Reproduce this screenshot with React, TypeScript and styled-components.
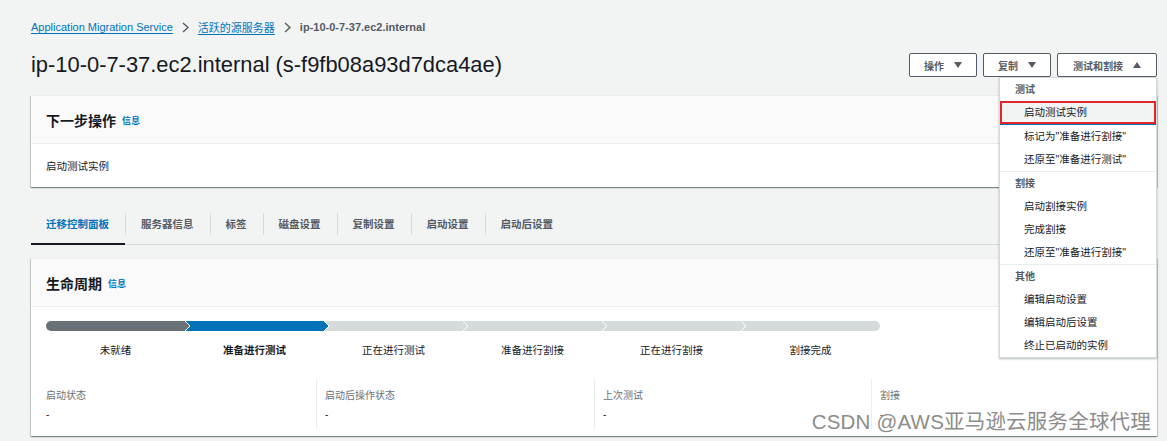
import * as React from 'react';
import styled, { createGlobalStyle } from 'styled-components';

const GlobalStyle = createGlobalStyle`
  body {
    margin: 0;
    background: #f2f3f3;
    font-family: "Liberation Sans", "Noto Sans CJK SC", sans-serif;
    color: #16191f;
  }
`;

const Page = styled.div`
  position: relative;
  width: 1167px;
  height: 441px;
  overflow: hidden;
  background: #f2f3f3;
`;

const Main = styled.div`
  padding: 19px 10px 0 31px;
`;

const Breadcrumbs = styled.nav`
  display: flex;
  align-items: center;
  height: 16px;
  font-size: 11px;
`;

const Crumb = styled.a`
  color: #0073bb;
  text-decoration: underline;
  text-underline-offset: 2px;
`;

const CurrentCrumb = styled.span`
  color: #545b64;
  font-weight: bold;
`;

const Chevron = styled.svg`
  margin: 0 9px;
`;

const HeaderRow = styled.div`
  display: flex;
  align-items: center;
  justify-content: space-between;
  height: 24px;
  margin-top: 18px;
`;

const Title = styled.h1`
  margin: 0;
  font-size: 21.9px;
  font-weight: normal;
  line-height: 24px;
  color: #16191f;
`;

const Actions = styled.div`
  position: relative;
  display: flex;
  gap: 6px;
`;

const Button = styled.button<{ $w: number }>`
  display: flex;
  align-items: center;
  justify-content: center;
  gap: 10px;
  width: ${p => p.$w}px;
  height: 24px;
  padding: 0;
  border: 1px solid #545b64;
  border-radius: 2px;
  background: #fff;
  color: #545b64;
  font-family: inherit;
  font-size: 10px;
  font-weight: bold;
`;

const Caret = styled.span<{ $up?: boolean }>`
  width: 0;
  height: 0;
  border-left: 4px solid transparent;
  border-right: 4px solid transparent;
  ${p => (p.$up ? 'border-bottom: 6px solid #545b64;' : 'border-top: 6px solid #545b64;')}
`;

const Menu = styled.div`
  position: absolute;
  top: 24px;
  right: 0;
  width: 156px;
  background: #fff;
  border: 1px solid #d5dbdb;
  box-shadow: 0 1px 2px rgba(0, 28, 36, 0.3);
  z-index: 10;
`;

const MenuGroup = styled.div`
  & + & {
    border-top: 1px solid #eaeded;
  }
`;

const MenuHeader = styled.div`
  height: 23px;
  line-height: 23px;
  padding-left: 15px;
  font-size: 10px;
  font-weight: bold;
  color: #545b64;
`;

const MenuItem = styled.div<{ $focused?: boolean }>`
  height: 23px;
  line-height: 23px;
  padding-left: 24px;
  font-size: 10.5px;
  color: #16191f;
  ${p =>
    p.$focused &&
    `
    background: #f2f3f3;
    box-shadow: inset 0 0 0 2px #e3262b;
    border-bottom: 1px solid #0073bb;
    line-height: 22px;
  `}
`;

const Card = styled.section<{ $top: number }>`
  margin-top: ${p => p.$top}px;
  background: #fff;
  border-top: 1px solid #eaeded;
  box-shadow: 0 1px 1px 0 rgba(0, 28, 36, 0.3), 1px 1px 1px 0 rgba(0, 28, 36, 0.15),
    -1px 1px 1px 0 rgba(0, 28, 36, 0.15);
`;

const CardHeader = styled.div`
  display: flex;
  align-items: center;
  gap: 6px;
  height: 47px;
  padding: 0 15px;
  background: #fafafa;
  border-bottom: 1px solid #eaeded;
`;

const CardTitle = styled.h2`
  margin: 0;
  font-size: 14px;
  font-weight: bold;
  color: #16191f;
`;

const InfoLink = styled.a`
  font-size: 9px;
  font-weight: bold;
  color: #0073bb;
  margin-top: 1px;
`;

const NextStep = styled.div`
  display: flex;
  align-items: center;
  height: 43px;
  padding: 0 15px;
  font-size: 10.5px;
  color: #16191f;
`;

const TabList = styled.div`
  display: flex;
  align-items: center;
  height: 40px;
  margin-top: 17px;
  border-bottom: 1px solid #d5dbdb;
`;

const Tab = styled.div<{ $active?: boolean }>`
  display: flex;
  align-items: center;
  height: 40px;
  padding: 0 16px 0 15px;
  box-sizing: border-box;
  font-size: 10.5px;
  font-weight: bold;
  color: ${p => (p.$active ? '#0073bb' : '#545b64')};
  border-bottom: 2px solid ${p => (p.$active ? '#16191f' : 'transparent')};
  margin-bottom: -1px;
`;

const TabSep = styled.span`
  width: 1px;
  height: 22px;
  background: #d5dbdb;
`;

const LifecycleBody = styled.div`
  padding: 10px 15px 7px;
`;

const StageLabels = styled.div`
  display: grid;
  grid-template-columns: repeat(6, 139px);
  margin-top: 7px;
  font-size: 10.5px;
  line-height: 16px;
`;

const StageLabel = styled.div<{ $current?: boolean }>`
  text-align: center;
  font-weight: ${p => (p.$current ? 'bold' : 'normal')};
  color: #16191f;
`;

const Stats = styled.div`
  display: grid;
  grid-template-columns: 270px 278px 277px 1fr;
  margin-top: 21px;
`;

const Stat = styled.div`
  height: 50px;
  padding-top: 9px;
  box-sizing: border-box;
  font-size: 10px;
  line-height: 16px;
  & + & {
    border-left: 1px solid #eaeded;
    padding-left: 8px;
  }
`;

const StatLabel = styled.div`
  color: #687078;
`;

const StatValue = styled.div`
  margin-top: 3px;
  color: #16191f;
`;

const Watermark = styled.div`
  position: absolute;
  right: 16px;
  bottom: 6px;
  font-family: "Liberation Sans", "Noto Sans CJK SC", sans-serif;
  font-size: 20.5px;
  color: #8c8c8c;
  letter-spacing: 0.2px;
  text-shadow: 0 0 2px #fff;
`;

const stages = ['未就绪', '准备进行测试', '正在进行测试', '准备进行割接', '正在进行割接', '割接完成'];
const stageColors = ['#687078', '#0073bb', '#d5dbdb', '#d5dbdb', '#d5dbdb', '#d5dbdb'];
const tabs = ['迁移控制面板', '服务器信息', '标签', '磁盘设置', '复制设置', '启动设置', '启动后设置'];

const menu = [
  { title: '测试', items: ['启动测试实例', '标记为"准备进行割接"', '还原至"准备进行测试"'] },
  { title: '割接', items: ['启动割接实例', '完成割接', '还原至"准备进行割接"'] },
  { title: '其他', items: ['编辑启动设置', '编辑启动后设置', '终止已启动的实例'] },
];

function Progress() {
  const seg = 139;
  const total = seg * 6;
  return (
    <svg width={total} height={10} viewBox={`0 0 ${total} 10`}>
      <defs>
        <clipPath id="bar">
          <rect x={0} y={0} width={total} height={10} rx={5} />
        </clipPath>
      </defs>
      <g clipPath="url(#bar)">
        {stageColors.map((c, i) => {
          const xs = i * seg;
          const xe = (i + 1) * seg;
          const last = i === 5;
          const pts = last
            ? `${xs},0 ${xe},0 ${xe},10 ${xs},10 ${xs + 5},5`
            : i === 0
            ? `${xs},0 ${xe},0 ${xe + 5},5 ${xe},10 ${xs},10`
            : `${xs},0 ${xe},0 ${xe + 5},5 ${xe},10 ${xs},10 ${xs + 5},5`;
          return <polygon key={i} points={pts} fill={c} />;
        })}
        {[1, 2, 3, 4, 5].map(i => (
          <polyline
            key={i}
            points={`${i * seg},0 ${i * seg + 5},5 ${i * seg},10`}
            fill="none"
            stroke="#fff"
            strokeWidth={1}
          />
        ))}
      </g>
    </svg>
  );
}

function ChevronIcon() {
  return (
    <Chevron width="7" height="11" viewBox="0 0 7 11">
      <polyline points="1,1 6,5.5 1,10" fill="none" stroke="#545b64" strokeWidth="1.4" />
    </Chevron>
  );
}

export default function App() {
  return (
    <Page>
      <GlobalStyle />
      <Main>
        <Breadcrumbs>
          <Crumb>Application Migration Service</Crumb>
          <ChevronIcon />
          <Crumb>活跃的源服务器</Crumb>
          <ChevronIcon />
          <CurrentCrumb>ip-10-0-7-37.ec2.internal</CurrentCrumb>
        </Breadcrumbs>

        <HeaderRow>
          <Title>ip-10-0-7-37.ec2.internal (s-f9fb08a93d7dca4ae)</Title>
          <Actions>
            <Button $w={68}>
              操作 <Caret />
            </Button>
            <Button $w={68}>
              复制 <Caret />
            </Button>
            <Button $w={100}>
              测试和割接 <Caret $up />
            </Button>
            <Menu>
              {menu.map((g, gi) => (
                <MenuGroup key={g.title}>
                  <MenuHeader>{g.title}</MenuHeader>
                  {g.items.map((it, ii) => (
                    <MenuItem key={it} $focused={gi === 0 && ii === 0}>
                      {it}
                    </MenuItem>
                  ))}
                </MenuGroup>
              ))}
            </Menu>
          </Actions>
        </HeaderRow>

        <Card $top={18}>
          <CardHeader>
            <CardTitle>下一步操作</CardTitle>
            <InfoLink>信息</InfoLink>
          </CardHeader>
          <NextStep>启动测试实例</NextStep>
        </Card>

        <TabList>
          {tabs.map((t, i) => (
            <React.Fragment key={t}>
              {i > 0 && <TabSep />}
              <Tab $active={i === 0}>{t}</Tab>
            </React.Fragment>
          ))}
        </TabList>

        <Card $top={13}>
          <CardHeader>
            <CardTitle>生命周期</CardTitle>
            <InfoLink>信息</InfoLink>
          </CardHeader>
          <LifecycleBody>
            <Progress />
            <StageLabels>
              {stages.map((s, i) => (
                <StageLabel key={s} $current={i === 1}>
                  {s}
                </StageLabel>
              ))}
            </StageLabels>
            <Stats>
              {['启动状态', '启动后操作状态', '上次测试', '割接'].map(l => (
                <Stat key={l}>
                  <StatLabel>{l}</StatLabel>
                  <StatValue>-</StatValue>
                </Stat>
              ))}
            </Stats>
          </LifecycleBody>
        </Card>
      </Main>
      <Watermark>CSDN @AWS亚马逊云服务全球代理</Watermark>
    </Page>
  );
}
